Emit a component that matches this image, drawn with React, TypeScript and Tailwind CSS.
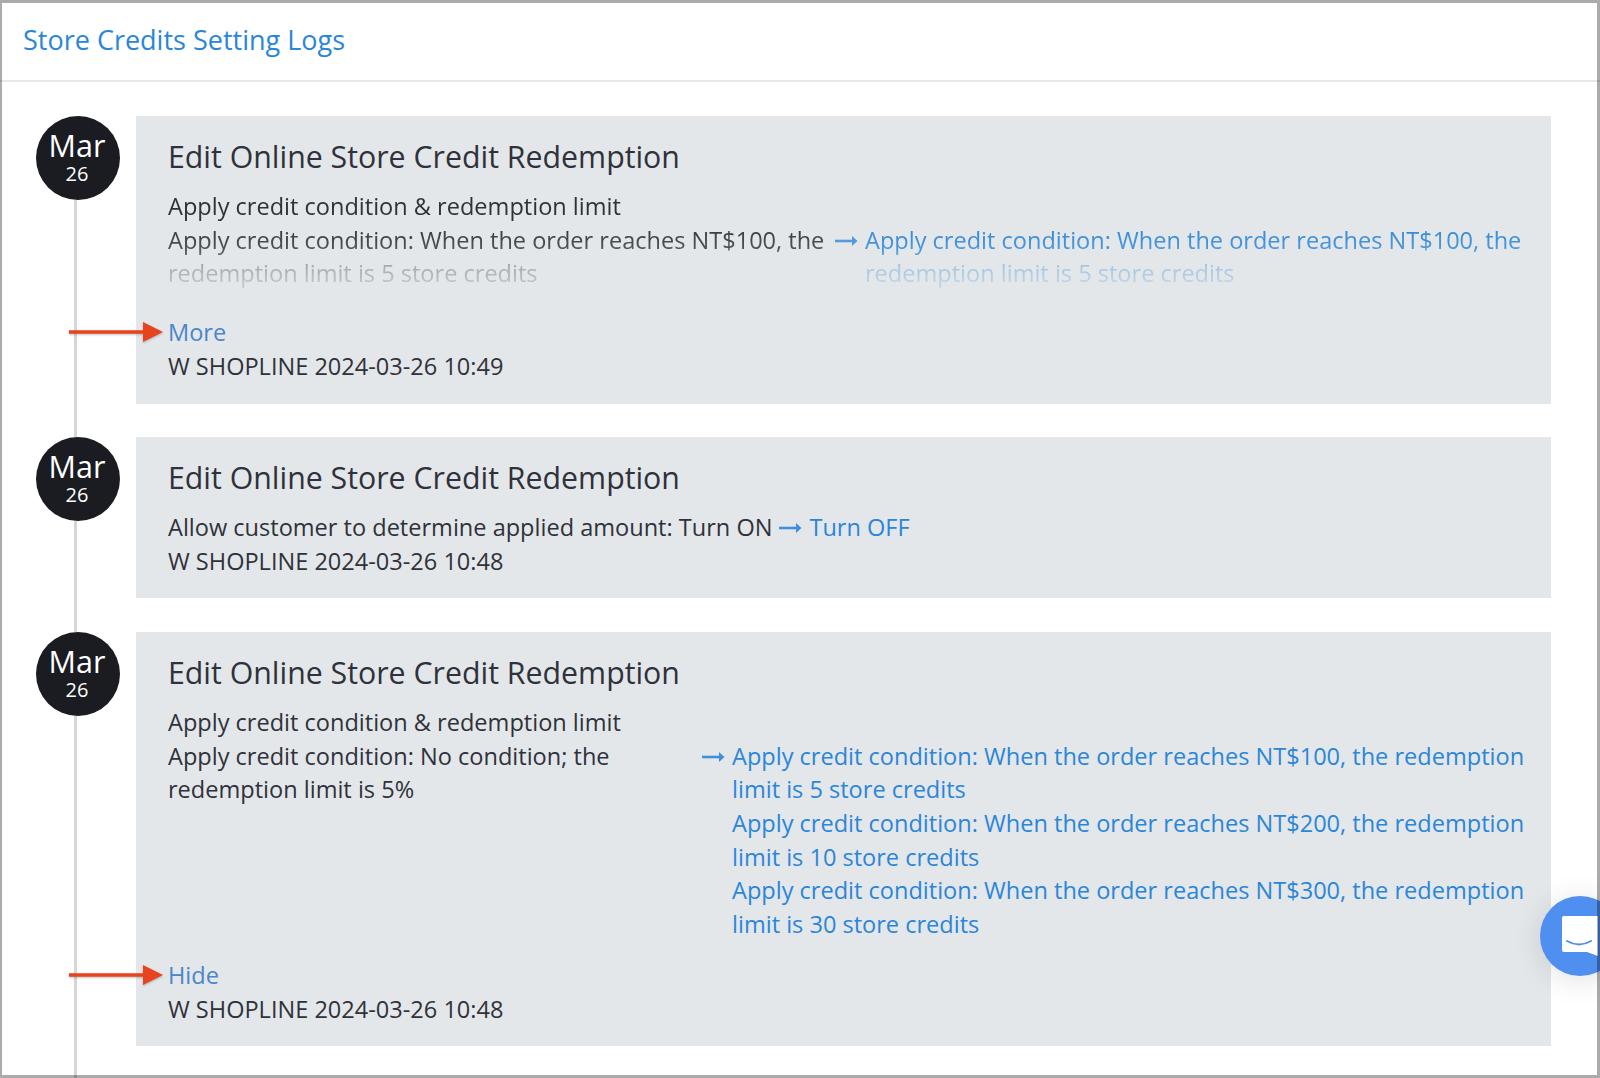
const FONT = "font-['Open_Sans',sans-serif]";

function ArrowBlue() {
  return (
    <svg width="23" height="12" viewBox="0 0 23 12" className="mt-[11px] shrink-0">
      <path d="M0 6H20" stroke="#3f8fdc" strokeWidth="2.6" />
      <path d="M17 1L22.5 6L17 11Z" fill="#3f8fdc" />
    </svg>
  );
}

function RedArrow() {
  return (
    <svg width="96" height="24" viewBox="0 0 96 24" className="absolute left-[-99px] top-[4px] drop-shadow-[0_1px_1px_rgba(0,0,0,0.25)]">
      <path d="M0 12H76" stroke="#e8431f" strokeWidth="3.5" />
      <path d="M74 2L94 12L74 22Z" fill="#e8431f" />
    </svg>
  );
}

function DateBadge() {
  return (
    <div className="w-[84px] h-[84px] shrink-0 rounded-full bg-[#1a1c22] text-white flex flex-col items-center pt-[11px] pr-[2px]">
      <span className="text-[30.5px] leading-[36px]">Mar</span>
      <span className="text-[20px] leading-[22px]">26</span>
    </div>
  );
}

function Row({ children, last }: { children: React.ReactNode; last?: boolean }) {
  return (
    <div className="flex gap-[16px] items-stretch">
      <div className="w-[84px] shrink-0 flex flex-col items-center">
        <DateBadge />
        <div className="w-[3px] flex-1 mr-[6px] bg-[#d6d6d8]" />
      </div>
      <div className={`flex-1 ${last ? "" : "pb-[33.5px]"}`}>
        <div className="bg-[#e4e7ea] pl-[32px] pr-[22px] pt-[21px] pb-[20px] text-[23.56px] leading-[33.7px] text-[#2f323a]">
          <h3 className="text-[30.3px] leading-[40px] mb-[13px] font-normal">Edit Online Store Credit Redemption</h3>
          {children}
        </div>
      </div>
    </div>
  );
}

export default function App() {
  return (
    <div className={`relative w-[1600px] h-[1078px] overflow-hidden bg-white ${FONT}`}>
      <header className="h-[82px] border-b-2 border-[#e8e8e8] flex items-center pl-[23px]">
        <h2 className="text-[27px] text-[#2a86d8] font-normal">Store Credits Setting Logs</h2>
      </header>
      <div className="pt-[34px] pl-[36px] pr-[49px]">
        <Row>
          <div className="[mask-image:linear-gradient(to_bottom,#000_33%,#000c_60%,#0005_75%,#0002_100%)]">
            <div>Apply credit condition &amp; redemption limit</div>
            <div className="flex gap-[7px]">
              <div className="w-[660px] shrink-0">Apply credit condition: When the order reaches NT$100, the redemption limit is 5 store credits</div>
              <ArrowBlue />
              <div className="flex-1 text-[#2a86d8]">Apply credit condition: When the order reaches NT$100, the redemption limit is 5 store credits</div>
            </div>
          </div>
          <div className="relative mt-[25px] text-[#4a86c8]">
            <RedArrow />
            More
          </div>
          <div>W SHOPLINE 2024-03-26 10:49</div>
        </Row>
        <Row>
          <div className="flex gap-[7px]">
            <span>Allow customer to determine applied amount: Turn ON</span>
            <ArrowBlue />
            <span className="text-[#2a86d8]">Turn OFF</span>
          </div>
          <div>W SHOPLINE 2024-03-26 10:48</div>
        </Row>
        <Row last>
          <div>Apply credit condition &amp; redemption limit</div>
          <div className="flex gap-[7px]">
            <div className="w-[527px] shrink-0">Apply credit condition: No condition; the redemption limit is 5%</div>
            <ArrowBlue />
            <div className="flex-1 text-[#2a86d8]">
              <div>Apply credit condition: When the order reaches NT$100, the redemption limit is 5 store credits</div>
              <div>Apply credit condition: When the order reaches NT$200, the redemption limit is 10 store credits</div>
              <div>Apply credit condition: When the order reaches NT$300, the redemption limit is 30 store credits</div>
            </div>
          </div>
          <div className="relative mt-[17px] text-[#4a86c8]">
            <RedArrow />
            Hide
          </div>
          <div>W SHOPLINE 2024-03-26 10:48</div>
        </Row>
        <div className="w-[84px] flex flex-col items-center h-[40px]">
          <div className="w-[3px] h-full mr-[6px] bg-[#d6d6d8]" />
        </div>
      </div>

      <div className="absolute left-[1540px] top-[896px] w-[80px] h-[80px] rounded-full bg-[#4f8ff0] shadow-[0_4px_30px_rgba(0,0,0,0.12)]">
        <svg width="60" height="50" viewBox="0 0 60 50" className="absolute left-[20px] top-[18px]">
          <path d="M4 2H38V42L27 38H4Q2 38 2 36V4Q2 2 4 2Z" fill="#fff" />
          <path d="M7 27Q19 34 31 27" stroke="#4f8ff0" strokeWidth="2" fill="none" strokeLinecap="round" />
        </svg>
      </div>
      <div className="absolute inset-0 pointer-events-none border-t-[3px] border-l-[2px] border-r-[3px] border-b-[3px] border-[rgba(0,0,0,0.33)]" />
    </div>
  );
}
